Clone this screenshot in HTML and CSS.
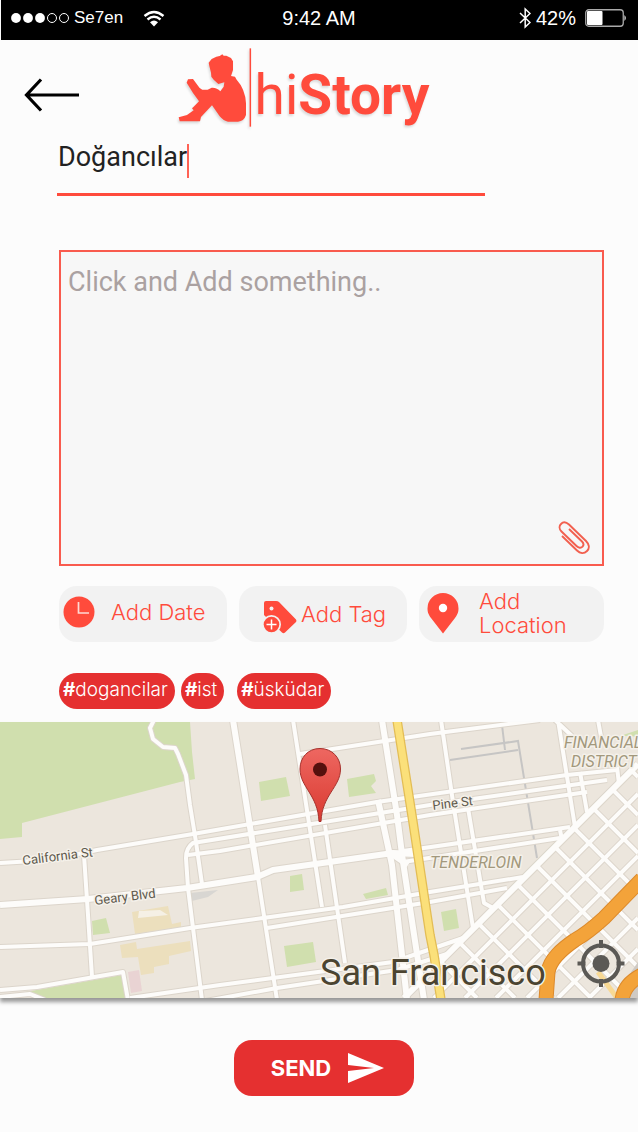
FILE: index.html
```html
<!DOCTYPE html>
<html lang="en">
<head>
<meta charset="utf-8">
<meta name="viewport" content="width=device-width, initial-scale=1">
<title>hiStory</title>
<link rel="stylesheet" href="styles.css">
</head>
<body>
<div class="status">
  <div class="status-side">
    <svg class="signal" width="58" height="12" viewBox="0 0 58 12" aria-hidden="true">
      <g fill="#fff"><circle cx="5" cy="6" r="4.9"/><circle cx="17" cy="6" r="4.9"/><circle cx="29" cy="6" r="4.9"/></g>
      <g fill="none" stroke="#fff"><circle cx="41" cy="6" r="4.5"/><circle cx="53" cy="6" r="4.5"/></g>
    </svg>
    <span class="carrier">Se7en</span>
    <svg class="wifi" width="22" height="17" viewBox="0 0 22 17" aria-hidden="true">
      <g fill="none" stroke="#fff" stroke-width="2.4"><path d="M1.5 6Q11-2 20.500 6"/><path d="M4.500 9.500Q11 4 17.500 9.500"/></g>
      <path d="M7 12.200Q11 8.800 15 12.200L11 16.500Z" fill="#fff"/>
    </svg>
  </div>
  <span class="clock">9:42 AM</span>
  <div class="status-side status-right">
    <svg width="12" height="22" viewBox="0 0 12 22" aria-hidden="true"><path d="M1 6L11 15.500L6.200 20V2L11 6.500L1 16" fill="none" stroke="#fff" stroke-width="1.500"/></svg>
    <span>42%</span>
    <svg class="battery" width="42" height="18" viewBox="0 0 42 18" aria-hidden="true">
      <rect x=".75" y=".75" width="37.500" height="16.500" rx="3" fill="none" stroke="#aaa" stroke-width="1.300"/>
      <rect x="2" y="2" width="15.500" height="14" rx="1" fill="#fff"/><path d="M39.500 6Q42 9 39.500 12Z" fill="#fff"/>
    </svg>
  </div>
</div>

<header class="header">
  <button class="back" aria-label="Back">
    <svg width="56" height="34" viewBox="0 0 56 34" aria-hidden="true"><path d="M55 17H3M17 1.500L2.500 17L17 32.500" fill="none" stroke="#000" stroke-width="3.200"/></svg>
  </button>
  <div class="logo">
    <svg class="reader" width="80" height="80" viewBox="20 24 240 240" aria-hidden="true">
      <path fill="#ff4b3c" d="M129 78L127 68L136 57L150 50L160 48L168 43L172 47L180 47L194 54L200 64L200 90L194 108L206 110L210 118Q237 148 239 190L239 225Q233 244 215 245L185 245Q172 243 160 229L137 196L104 231L101 244L40 244L37 232L62 225L82 211L77 205L82 200L98 184L80 159L61 128L65 118L80 117L100 144L108 149L124 149L136 143Q152 142 162 154L172 140L174 127L156 132L142 119L135 110L134 98Z"/>
      <path d="M252 25V260" stroke="#ff4b3c" stroke-width="4.500"/>
    </svg>
    <h1 class="wordmark">hi<b>Story</b></h1>
  </div>
</header>

<main>
  <form class="form">
    <div class="title-field">
      <input class="title-input" type="text" aria-label="Title" value="Doğancılar">
      <span class="caret"></span>
    </div>
    <div class="note">
      <textarea class="note-input" aria-label="Story" placeholder="Click and Add something.."></textarea>
      <button class="attach" type="button" aria-label="Attach a file">
        <svg width="32" height="34" viewBox="0 0 32 34" aria-hidden="true"><path d="M4 15L19 29.500C22 32.500 26 33 29 30C32 27 31 23 28 20L11 3.500C8 .8 5 .8 3 3C1 5 1 8 3.500 10.500L18.500 25C20.500 27 23 27.300 24.500 25.700C26 24 25.500 22 24 20.500L11 8" fill="none" stroke="#f2604f" stroke-width="1.900"/></svg>
      </button>
    </div>
    <div class="actions">
      <button class="action date" type="button">
        <svg width="32" height="32" viewBox="0 0 32 32" aria-hidden="true"><circle cx="16" cy="16" r="15.500" fill="#ff4b3c"/><path d="M15.500 6V17H26" fill="none" stroke="#ffd9d3" stroke-width="1.700"/></svg>
        <span>Add Date</span>
      </button>
      <button class="action tag" type="button">
        <svg width="34" height="34" viewBox="0 0 34 34" aria-hidden="true"><path d="M3 1H13Q15 1 16 2L33 19.500Q34 21 33 22L22 32.500Q20.500 34 19 32.500L1 15V3Q1 1 3 1Z" fill="#ff4b3c"/><circle cx="8.500" cy="8.500" r="2" fill="#f2f2f2"/><circle cx="8.500" cy="24.500" r="9.500" fill="#f2f2f2"/><circle cx="8.500" cy="24.500" r="7.800" fill="#ff4b3c"/><path d="M8.500 19.500V29.500M3.500 24.500H13.500" stroke="#fff" stroke-width="1.500"/></svg>
        <span>Add Tag</span>
      </button>
      <button class="action place" type="button">
        <svg width="32" height="42" viewBox="0 0 32 42" aria-hidden="true"><path d="M16 1A15.500 15.500 0 0 0 .5 16.500C.5 21 2 23 4 26L16 41.500L28 26C30 23 31.500 21 31.500 16.500A15.500 15.500 0 0 0 16 1Z" fill="#ff4b3c"/><circle cx="16" cy="16" r="4.200" fill="#fff"/></svg>
        <span>Add Location</span>
      </button>
    </div>
    <div class="chips">
      <span class="chip"><b>#</b>dogancilar</span>
      <span class="chip chip-spaced"><b>#</b>ist</span>
      <span class="chip"><b>#</b>üsküdar</span>
    </div>
  </form>

  <section class="map" aria-label="Map">
    <svg class="map-canvas" viewBox="0 0 638 276">
      <defs>
        <g id="streets" fill="none" stroke-linejoin="round">
          <path d="M154-2L150 6L153 17L163 25L175 26L178 32L186 53L190 83L196 120L202 162"/>
          <path d="M0 141L50 138L97 128L193 112L377 80L567 53L617 48"/>
          <path d="M188 166L186 136Q186 126 193 121L430 83L607 58"/>
          <path d="M188 133L220 129L430 93L587 70"/>
          <path d="M0 225L90 222L190 206L263 196L343 185L430 170L523 155"/>
          <path d="M267 206L430 180L507 166"/>
          <path d="M0 268L37 265L123 250L128 278M0 275L30 272L45 278M130 276L220 263L393 240L463 216"/>
          <path d="M200 280L277 266L397 248L450 231"/>
          <path d="M84 133L88 193L92 255M188 166L202 278"/>
          <path d="M258 155L277 278M293-2L322 185M325 103L345 241"/>
          <path d="M300 32L430 12L540-2M441-2L453 80L473 206M468 86L484 181L493 186"/>
          <path d="M558-2L575 105M580 50L587 90M598-2L602 20M555-2L572 14M617 45L619 62M560 108L562 118"/>
          <path d="M403 129L570 105M403 140L560 116"/>
          <path d="M638 72L434 276M638 103L465 276M638 134L496 276M638 165L527 276M638 196L558 276M638 227L589 276M638 258L620 276"/>
          <path d="M440 239L477 276M459 220L515 276M478 201L553 276M497 182L591 276M517 162L631 276M536 143L638 245M555 125L638 208M574 106L638 170M593 86L638 131M612 67L638 93M631 48L638 55"/>
        </g>
        <g id="avenues" fill="none" stroke-linejoin="round">
          <path d="M0 183L88 177L187 166L257 155L273 148L393 131L415 132"/>
          <path d="M233-2L258 155M382-2L397 93L403 140L424 278M378 78L392 143L407 278"/>
          <path d="M638 42L404 276M392 132L408 143"/>
        </g>
        <linearGradient id="pin" x1="0" y1="0" x2="0" y2="1"><stop offset="0" stop-color="#ee6761"/><stop offset="1" stop-color="#d93a30"/></linearGradient>
      </defs>
      <rect width="638" height="276" fill="#ece6dd"/>
      <g fill="#d0dfae">
        <path d="M0 0H190L192 30L195 57L180 60L22 101V115L0 117Z"/>
        <path d="M25 270L122 253L127 276H45Z"/><path d="M92 199L106 196L110 211L93 213Z"/>
        <path d="M259 60L286 55L290 74L261 79Z"/><path d="M347 57L374 52L376 59L371 64L376 71L349 75Z"/>
        <path d="M290 154L302 152L304 168L290 170Z"/><path d="M363 172L386 166L388 173L366 177Z"/>
        <path d="M284 224L313 220L316 240L287 245Z"/><path d="M441 190L456 187L459 206L444 209Z"/><path d="M620 14L638 8V16L632 14Z"/>
      </g>
      <path d="M132 190L168 184L172 202L181 200V205L135 212ZM120 223L136 220L137 227L190 219L191 229L169 234V242L154 245V251L141 253L138 235L122 236Z" fill="#ecdfbd"/>
      <path d="M139 189L160 188L168 193L138 196Z" fill="#f5f0e5"/>
      <path d="M128 250L139 248L142 269L131 271Z" fill="#e9d3d3"/>
      <path d="M190 171L218 168L208 175L192 179Z" fill="#d8d6d2"/>
      <path d="M461 27L518 19L537 136M450 38L518 28M502 3L505 28" fill="none" stroke="#c6c5c4" stroke-width="2"/>
      <use href="#streets" stroke="#dcd5cb" stroke-width="6"/>
      <use href="#avenues" stroke="#dcd5cb" stroke-width="8"/>
      <use href="#streets" stroke="#fdfcfa" stroke-width="4"/>
      <use href="#avenues" stroke="#fdfcfa" stroke-width="6"/>
      <path d="M397-2L413 100L430 213L434 233L441 278" fill="none" stroke="#e3bd55" stroke-width="9.500"/>
      <path d="M397-2L413 100L430 213L434 233L441 278" fill="none" stroke="#fbe07a" stroke-width="7"/>
      <path d="M612 278L638 240V276Z" fill="#cfcac4"/><path d="M598 250L617 276" stroke="#f8d994" stroke-width="5"/>
      <g fill="none" stroke-linejoin="round">
        <path d="M642 157L604 196C592 207 584 213 575 218C562 227 550 237 548 250L546 278M642 253Q624 262 622 278" stroke="#dc8a2c" stroke-width="15"/>
        <path d="M642 157L604 196C592 207 584 213 575 218C562 227 550 237 548 250L546 278M642 253Q624 262 622 278" stroke="#f3a33a" stroke-width="13"/>
      </g>
      <g class="map-label">
        <text class="street" transform="translate(23 143) rotate(-7)">California St</text>
        <text class="street" transform="translate(95 183) rotate(-7)">Geary Blvd</text>
        <text class="street" transform="translate(433 88) rotate(-7)">Pine St</text>
        <text class="district" x="430" y="146">TENDERLOIN</text>
        <text class="district" x="564" y="26">FINANCIAL</text>
        <text class="district" x="571" y="45">DISTRICT</text>
        <text class="city" x="320" y="263">San Francisco</text>
      </g>
      <path d="M320 26.500C308 26.500 300 35.500 300 47C300 65 318 73 319 99.500H321C322 73 340.500 65 340.500 47C340.500 35.500 332 26.500 320 26.500Z" fill="url(#pin)" stroke="#a6302b"/>
      <circle cx="320" cy="47.500" r="7" fill="#55100d"/>
      <g fill="none" stroke="#5b5955" stroke-width="4"><circle cx="601" cy="241.500" r="18"/><path d="M601 218V226M601 257V265M577.500 241.500H585.500M616.500 241.500H624.500"/></g>
      <circle cx="601" cy="241.500" r="8.500" fill="#5b5955"/>
    </svg>
  </section>

  <div class="footer">
    <button class="send">SEND
      <svg width="36" height="30" viewBox="0 0 36 30" aria-hidden="true"><path d="M0 0L36 15L0 30V18L26 15L0 12Z" fill="#fff"/></svg>
    </button>
  </div>
</main>
</body>
</html>
```
FILE: styles.css
```css
* { box-sizing: border-box; }
body { margin: 0; background: #fcfcfc; font-family: Inter, "Open Sans", sans-serif; }
button { border: 0; padding: 0; background: none; font: inherit; color: inherit; cursor: pointer; }
svg { flex: none; display: block; }

.status {
  display: flex; align-items: center; height: 40px; margin-left: 1px; padding: 0 11px 4px 10px;
  background: #000; color: #fff; font: 20px/24px "Liberation Sans", Arial, sans-serif;
}
.status-side { display: flex; flex: 1; align-items: center; gap: 5px; }
.status-right { justify-content: flex-end; gap: 5px; }
.carrier { font-size: 17px; }
.wifi { margin-left: 15px; }
.battery { margin-left: 4px; }

.header { display: grid; grid-template-columns: 1fr auto 1fr; height: 96px; padding: 8px 24px; }
.back { width: 56px; height: 34px; margin-top: 30px; }
.logo { display: flex; gap: 2px; margin-right: 36px; }
.reader, .wordmark { filter: drop-shadow(-1px 2px 1px #0002); }
.wordmark { margin: 0; padding-top: 15px; color: #ff4b3c; font: 400 55px/64px Roboto, sans-serif; }
.wordmark b { font-weight: 700; }

.form { padding: 0 34px 0 59px; }
.title-field {
  display: flex; width: 78.5%; height: 60px; margin-left: -2px; padding: 6px 0 0 1px;
  border-bottom: 3px solid #ff4b3c;
}
.title-input {
  field-sizing: content; height: 30px; padding: 0; border: 0; background: none;
  color: #222; font: 27px/30px Roboto, sans-serif;
}
.caret { width: 2px; height: 34px; margin-top: 2px; background: #ff6255; }

.note { position: relative; margin-top: 54px; }
.note-input {
  display: block; width: 100%; height: 316px; padding: 14px 7px; border: 2px solid #f95b4e;
  background: #f7f7f7; resize: none; font: 27px/32px Roboto, sans-serif;
}
.note-input::placeholder { color: #aaa1a1; opacity: 1; }
.attach { position: absolute; right: 14px; bottom: 11px; }

.actions { display: grid; grid-template-columns: 168fr 168fr 185fr; gap: 12px; margin-top: 20px; }
.action {
  display: flex; align-items: center; height: 56px; border-radius: 18px; background: #f2f2f2;
  color: #ff4b3c; font-size: 22px; font-weight: 300; line-height: 24px; text-align: left;
}
.date { gap: 16px; padding: 0 4px 4px; }
.tag { gap: 4px; padding: 0 4px 0 24px; }
.tag svg { margin-top: 6px; }
.place { gap: 20px; padding: 0 16px 2px 8px; }

.chips { display: flex; gap: 6px; margin-top: 31px; }
.chip {
  height: 36px; padding: 0 7px 0 4px; border-radius: 18px; background: #e53030;
  color: #fff; font-size: 19px; font-weight: 300; line-height: 34px;
}
.chip b { font-weight: 700; }
.chip-spaced { margin-right: 7px; }

.map { margin-top: 13px; box-shadow: 0 4px 4px #0006; }
.map-canvas { width: 100%; height: auto; }
.map-label { font-family: Roboto, sans-serif; paint-order: stroke; stroke: #f5f1ea; stroke-width: 3px; stroke-linejoin: round; }
.street { fill: #5e594d; font-size: 13px; }
.district { fill: #a2987c; font-size: 16px; font-style: italic; }
.city { fill: #4b4431; font-size: 36px; }

.footer { display: flex; justify-content: center; padding: 42px 0 36px; }
.send {
  display: flex; align-items: center; gap: 17px; height: 56px; margin-left: 10px; padding: 0 30px 0 37px;
  border-radius: 18px; background: #e53030; color: #fff; font-size: 22px; font-weight: 700;
}
```
